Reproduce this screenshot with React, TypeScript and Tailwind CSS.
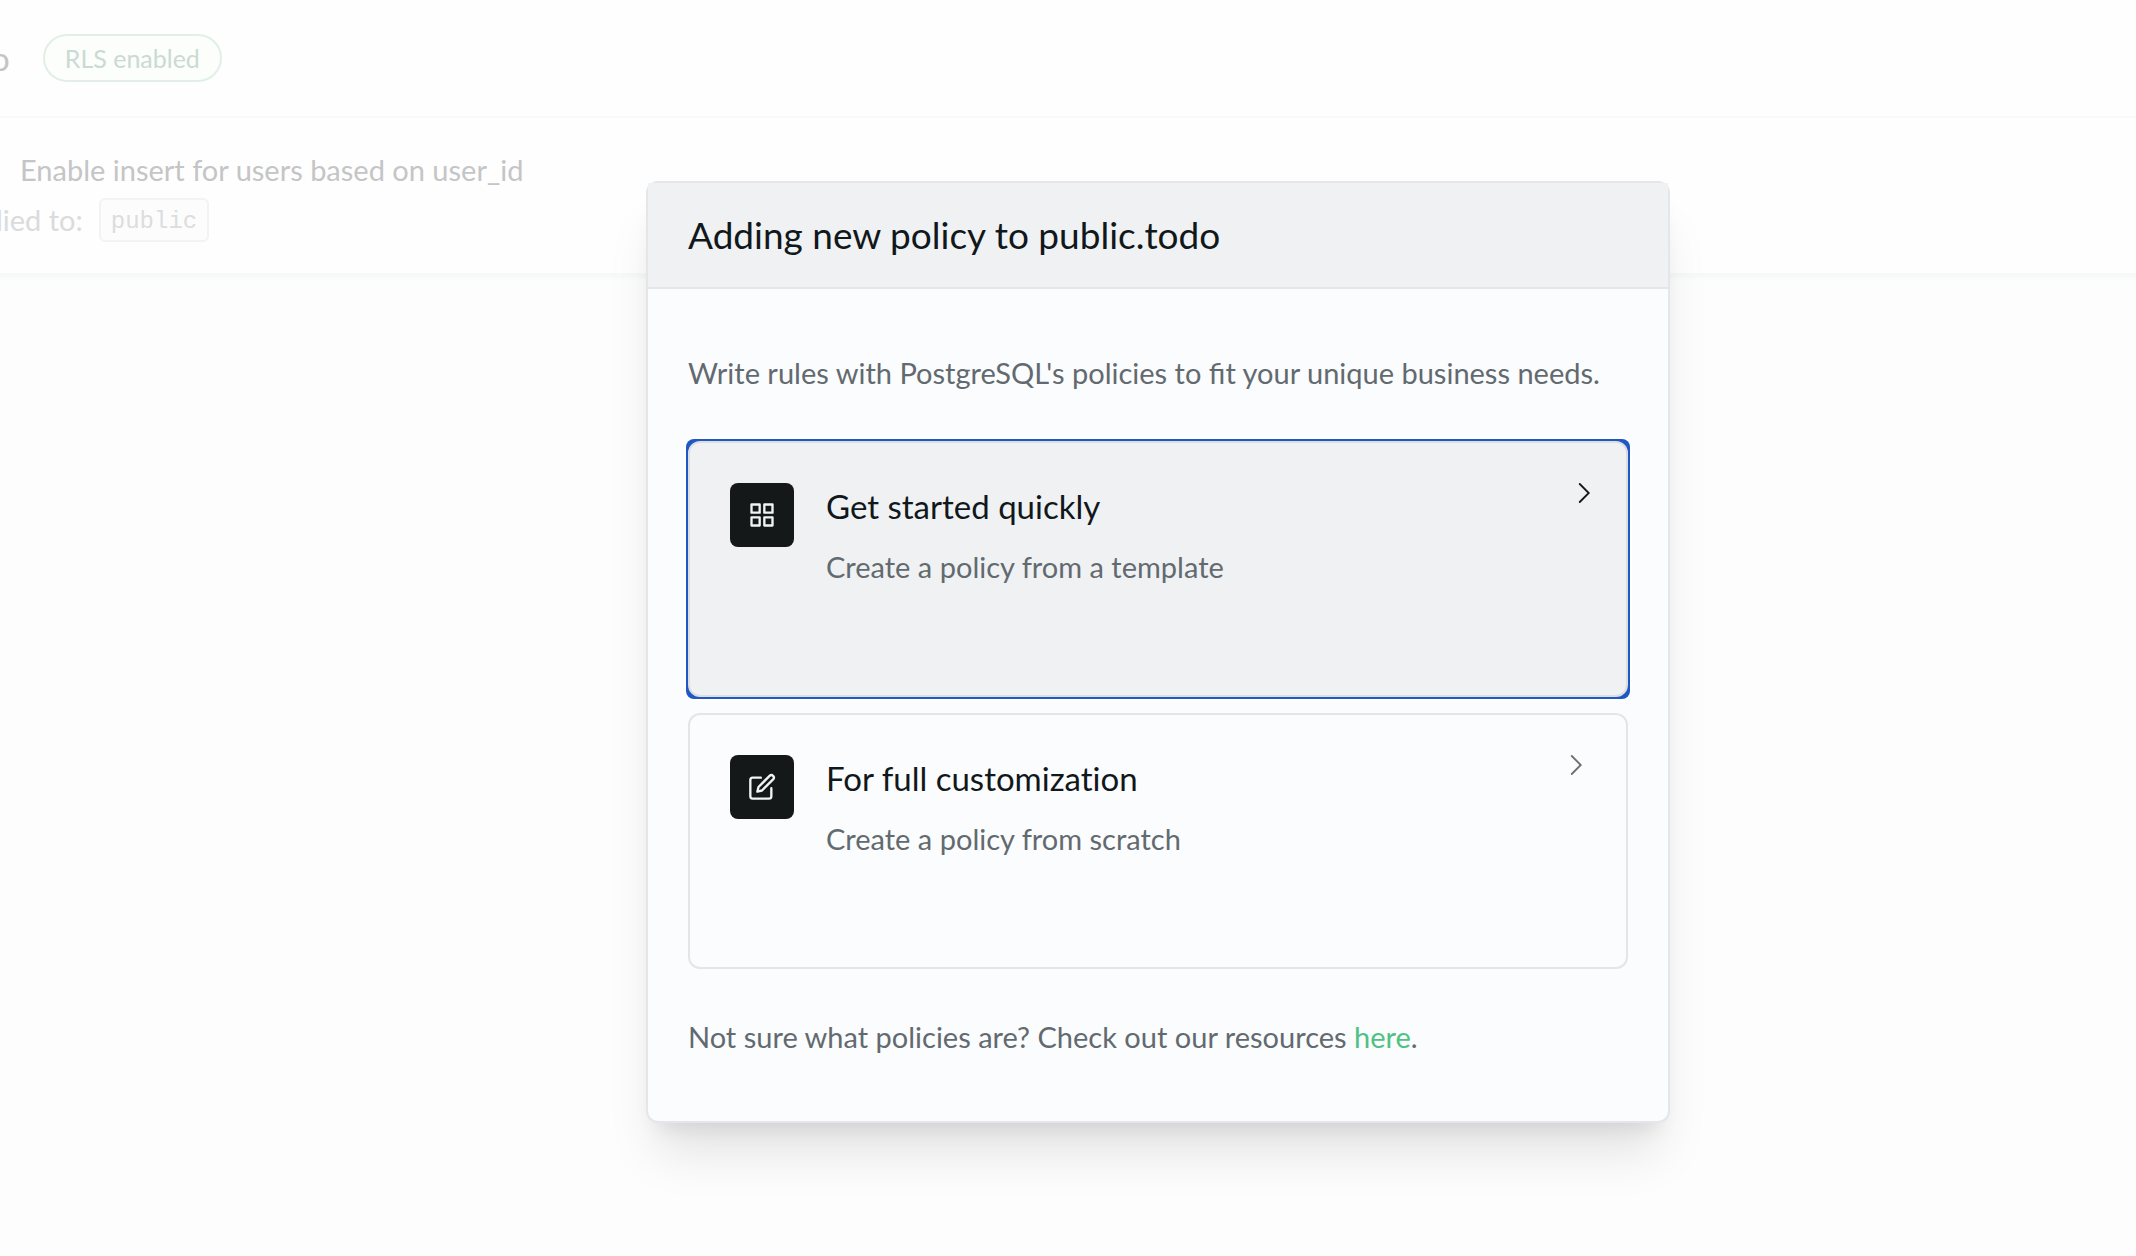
import type { ReactNode } from 'react';

function GridIcon() {
  return (
    <svg className="size-7" viewBox="0 0 24 24" fill="none" stroke="currentColor" strokeWidth="2" strokeLinecap="round" strokeLinejoin="round" aria-hidden="true">
      <rect x="3" y="3" width="7" height="7" />
      <rect x="14" y="3" width="7" height="7" />
      <rect x="14" y="14" width="7" height="7" />
      <rect x="3" y="14" width="7" height="7" />
    </svg>
  );
}

function EditIcon() {
  return (
    <svg className="size-7" viewBox="0 0 24 24" fill="none" stroke="currentColor" strokeWidth="2" strokeLinecap="round" strokeLinejoin="round" aria-hidden="true">
      <path d="M11 4H4a2 2 0 0 0-2 2v14a2 2 0 0 0 2 2h14a2 2 0 0 0 2-2v-7" />
      <path d="M18.5 2.5a2.121 2.121 0 0 1 3 3L12 15l-4 1 1-4 9.5-9.5z" />
    </svg>
  );
}

function Chevron({ className }: { className: string }) {
  return (
    <svg className={className} viewBox="0 0 20 20" fill="none" stroke="currentColor" strokeWidth="1.8" strokeLinecap="round" aria-hidden="true">
      <path d="M5.75 1l9 9-9 9" />
    </svg>
  );
}

type OptionProps = { icon: ReactNode; title: string; description: string; active?: boolean };

function OptionCard({ icon, title, description, active }: OptionProps) {
  return (
    <div className={active ? '-m-0.5 rounded-lg bg-[#1d58c4] p-0.5 shadow-[0_0_0_2px_#ffffff]' : ''}>
      <button
        type="button"
        className={
          active
            ? 'flex min-h-64 w-full items-start gap-8 rounded-xl border-2 border-[#dcdee1] bg-[#f0f1f3] p-10 text-left'
            : 'flex min-h-64 w-full items-start gap-8 rounded-xl border-2 border-[#e3e5e8] bg-[#fbfcfd] p-10 text-left'
        }
      >
        <span className="flex size-16 shrink-0 items-center justify-center rounded-lg bg-[#151819] text-[#f1f3f5]">{icon}</span>
        <span className="flex flex-1 flex-col">
          <span className="text-[33px] leading-[46px] text-[#11181c] [font-variant-ligatures:none]">{title}</span>
          <span className="mt-[18px] text-[29px] leading-10 text-[#626a70]">{description}</span>
        </span>
        <Chevron className={active ? '-mr-2 size-5 shrink-0 text-[#11181c]' : 'size-5 shrink-0 text-[#687076]'} />
      </button>
    </div>
  );
}

export default function App() {
  return (
    <div className="relative min-h-screen overflow-hidden bg-[#fdfdfd] font-['Lato',sans-serif]">
      <section className="border-b-4 border-[#f7f9f9] bg-[#fefefe] shadow-[0_2px_2px_#f9fafa]">
        <header className="flex items-center gap-[33px] border-b-2 border-[#f9f9f9] pt-[34px] pb-[34px]">
          <h2 className="-ml-[9px] text-[33px] leading-10 text-[#c3c4c5]">o</h2>
          <span className="rounded-full border-2 border-[#e2efe7] bg-[#fcfefc] px-5 py-1.5 text-[25px] leading-8 text-[#cbdad2]">
            RLS enabled
          </span>
        </header>
        <div className="pt-8 pb-[31px]">
          <p className="pl-5 text-[29px] leading-10 text-[#c4c5c6]">Enable insert for users based on user_id</p>
          <p className="mt-2 -ml-1 flex items-center gap-4 text-[29px] leading-10 text-[#d9dbdc]">
            lied to:
            <code className="rounded-md border-2 border-[#f3f3f4] bg-[#fcfcfc] px-2.5 pt-1.5 pb-0.5 font-['Liberation_Mono',monospace] text-2xl leading-8 text-[#dcdddd]">
              public
            </code>
          </p>
        </div>
      </section>

      <div className="absolute inset-0 flex items-start justify-center pt-[181px] pl-[180px]">
        <div
          role="dialog"
          aria-labelledby="dialog-title"
          className="w-full max-w-5xl rounded-xl border-2 border-[#e4e6e9] bg-[#fbfcfd] shadow-[0_40px_50px_-10px_rgba(0,0,0,0.1),0_16px_20px_-12px_rgba(0,0,0,0.1)]"
        >
          <div className="border-b-2 border-[#e4e6e9] bg-[#f0f1f3] px-10 py-6">
            <h1 id="dialog-title" className="text-[37px] leading-[56px] text-[#11181c]">
              Adding new policy to public.todo
            </h1>
          </div>
          <div className="px-10 py-16 text-[29px] leading-10 text-[#626a70]">
            <p>Write rules with PostgreSQL's policies to fit your unique business needs.</p>
            <div className="my-12 flex flex-col gap-4">
              <OptionCard icon={<GridIcon />} title="Get started quickly" description="Create a policy from a template" active />
              <OptionCard icon={<EditIcon />} title="For full customization" description="Create a policy from scratch" />
            </div>
            <p>
              Not sure what policies are? Check out our resources{' '}
              <a href="#resources" className="text-[#4fc283]">here</a>.
            </p>
          </div>
        </div>
      </div>
    </div>
  );
}
